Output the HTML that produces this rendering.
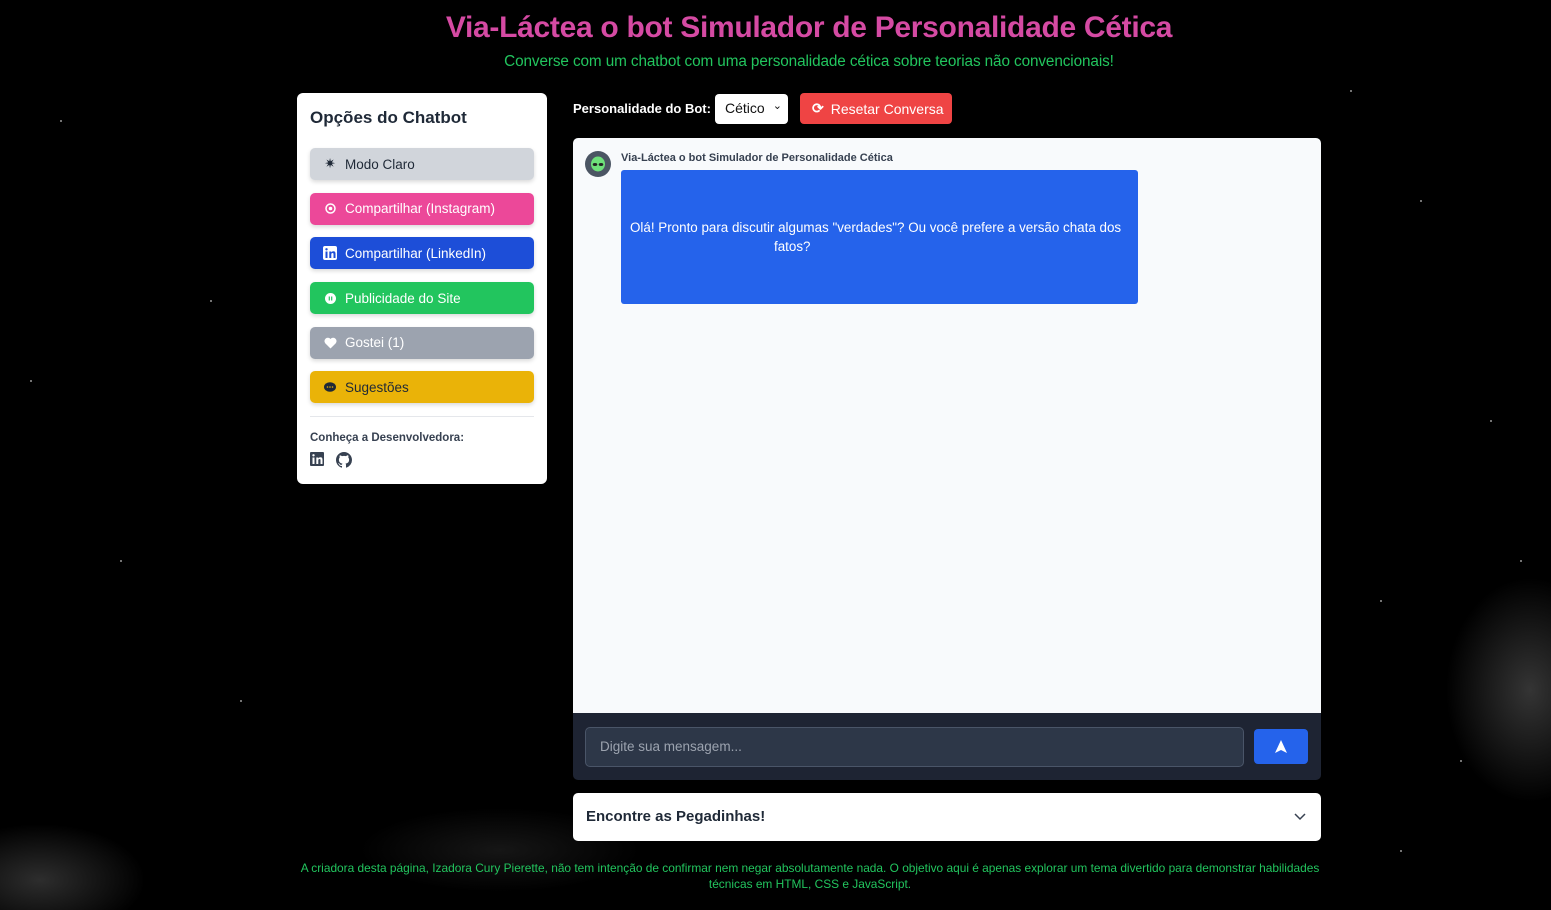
<!DOCTYPE html>
<html><head><meta charset="utf-8"><style>
*{box-sizing:border-box;margin:0;padding:0}
body{width:1551px;height:910px;overflow:hidden;background:#000;font-family:"Liberation Sans",sans-serif;position:relative}
.bg{position:absolute;inset:0;background:
radial-gradient(ellipse 120px 160px at 1530px 690px,rgba(150,150,150,.35),transparent 70%),
radial-gradient(ellipse 150px 80px at 40px 880px,rgba(150,150,150,.3),transparent 70%),
radial-gradient(ellipse 200px 60px at 500px 850px,rgba(120,120,120,.18),transparent 70%);}
.star{position:absolute;width:2px;height:2px;border-radius:50%;background:#999}
h1{position:absolute;top:11px;left:0;width:1618px;text-align:center;font-size:30px;font-weight:bold;color:#d54aa3;letter-spacing:-0.3px}
.sub{position:absolute;top:53px;left:0;width:1618px;text-align:center;font-size:15.3px;color:#22c55e;letter-spacing:-0.1px}
.side{position:absolute;left:297px;top:93px;width:250px;height:391px;background:#fff;border-radius:6px;padding:0 13px}
.side h2{font-size:17px;color:#1f2937;margin-top:15px;font-weight:bold}
.btn{height:32px;border-radius:5px;margin-top:12.7px;display:flex;align-items:center;padding-left:13px;font-size:13.5px;color:#fff;box-shadow:0 2px 4px rgba(0,0,0,.15)}
.btn .i{width:14px;margin-right:8px;display:flex;justify-content:center}
.hr{border-top:1px solid #e5e7eb;margin-top:13px}
.dev{font-size:11.5px;color:#374151;margin-top:15px;font-weight:bold}
.top{position:absolute;left:573px;top:93px;display:flex;align-items:center}
.top .l{color:#fff;font-size:13px;font-weight:bold}
.sel{margin-left:4px;width:73px;height:30px;background:#fff;border-radius:4px;font-size:14px;color:#111;padding:6px 10px;position:relative}
.reset{margin-left:12px;width:152px;height:31px;background:#ef4444;border-radius:4px;color:#fff;font-size:14px;display:flex;align-items:center;padding-left:12px}
.chat{position:absolute;left:573px;top:138px;width:748px;height:575px;background:#f8fafc;border-radius:5px 5px 0 0}
.bar{position:absolute;left:573px;top:713px;width:748px;height:67px;background:#1e2433;border-radius:0 0 5px 5px}
.inp{position:absolute;left:12px;top:14px;width:659px;height:40px;background:#2d3748;border:1px solid #4a5568;border-radius:5px;color:#9ca3af;font-size:13.5px;padding:11px 14px}
.send{position:absolute;left:681px;top:16px;width:54px;height:35px;background:#2563eb;border-radius:4px}
.acc{position:absolute;left:573px;top:793px;width:748px;height:48px;background:#fff;border-radius:5px;font-size:15px;font-weight:bold;color:#1f2937;padding:15px 13px}
.foot{position:absolute;left:250px;top:860px;width:1120px;text-align:center;font-size:11.9px;color:#22c55e;line-height:16px}
</style></head><body>
<div class="bg"></div>
<div class="star" style="left:60px;top:120px"></div><div class="star" style="left:210px;top:300px"></div><div class="star" style="left:120px;top:560px"></div><div class="star" style="left:1420px;top:200px"></div><div class="star" style="left:1490px;top:420px"></div><div class="star" style="left:1380px;top:600px"></div><div class="star" style="left:1460px;top:760px"></div><div class="star" style="left:240px;top:700px"></div><div class="star" style="left:1350px;top:90px"></div><div class="star" style="left:30px;top:380px"></div><div class="star" style="left:1520px;top:560px"></div><div class="star" style="left:1400px;top:850px"></div>
<h1>Via-Láctea o bot Simulador de Personalidade Cética</h1>
<div class="sub">Converse com um chatbot com uma personalidade cética sobre teorias não convencionais!</div>
<div class="side">
<h2>Opções do Chatbot</h2>
<div class="btn" style="background:#d1d5db;color:#1f2937;margin-top:20px"><span class="i">✷</span>Modo Claro</div>
<div class="btn" style="background:#ec4899"><span class="i"><svg width="11" height="11"><circle cx="5.5" cy="5.5" r="4.5" fill="none" stroke="#fff" stroke-width="1.5"/><circle cx="5.5" cy="5.5" r="1.8" fill="#fff"/></svg></span>Compartilhar (Instagram)</div>
<div class="btn" style="background:#1d4ed8"><span class="i"><svg width="14" height="14"><rect width="14" height="14" rx="2" fill="#fff"/><rect x="2.5" y="5.5" width="2" height="6.5" fill="#1d4ed8"/><circle cx="3.5" cy="3.3" r="1.2" fill="#1d4ed8"/><path d="M6.3 5.5h2v1c.5-.8 1.3-1.2 2.2-1.2 1.4 0 2 .9 2 2.5V12h-2V8.2c0-.8-.3-1.2-.9-1.2s-1.3.4-1.3 1.3V12h-2z" fill="#1d4ed8"/></svg></span>Compartilhar (LinkedIn)</div>
<div class="btn" style="background:#22c55e"><span class="i"><svg width="11" height="11"><circle cx="5.5" cy="5.5" r="5.5" fill="#fff"/><rect x="3.7" y="3.5" width="1.2" height="4" fill="#22c55e"/><rect x="6.1" y="3.5" width="1.2" height="4" fill="#22c55e"/></svg></span>Publicidade do Site</div>
<div class="btn" style="background:#9ca3af"><span class="i"><svg width="13" height="12"><path d="M6.5 11.5L1.2 6.2A3.2 3.2 0 016.5 2a3.2 3.2 0 015.3 4.2z" fill="#fff"/></svg></span>Gostei (1)</div>
<div class="btn" style="background:#eab308;color:#1f2937"><span class="i"><svg width="12" height="11"><ellipse cx="6" cy="5" rx="6" ry="4.8" fill="#1f2937"/><circle cx="3.5" cy="5" r=".8" fill="#eab308"/><circle cx="6" cy="5" r=".8" fill="#eab308"/><circle cx="8.5" cy="5" r=".8" fill="#eab308"/></svg></span>Sugestões</div>
<div class="hr"></div>
<div class="dev">Conheça a Desenvolvedora:</div>
<div style="margin-top:8px;display:flex;gap:12px"><svg width="14" height="14"><rect width="14" height="14" rx="1" fill="#374151"/><rect x="2.5" y="5.5" width="2" height="6.5" fill="#fff"/><circle cx="3.5" cy="3.3" r="1.2" fill="#fff"/><path d="M6.3 5.5h2v1c.5-.8 1.3-1.2 2.2-1.2 1.4 0 2 .9 2 2.5V12h-2V8.2c0-.8-.3-1.2-.9-1.2s-1.3.4-1.3 1.3V12h-2z" fill="#fff"/></svg><svg width="16" height="16" viewBox="0 0 16 16"><path fill="#374151" d="M8 0C3.58 0 0 3.58 0 8c0 3.54 2.29 6.53 5.47 7.59.4.07.55-.17.55-.38v-1.33c-2.23.48-2.7-1.07-2.7-1.07-.36-.92-.89-1.17-.89-1.17-.73-.5.05-.49.05-.49.8.06 1.23.83 1.23.83.71 1.22 1.87.87 2.33.66.07-.52.28-.87.5-1.07-1.78-.2-3.64-.89-3.64-3.95 0-.87.31-1.59.82-2.15-.08-.2-.36-1.02.08-2.12 0 0 .67-.21 2.2.82A7.6 7.6 0 018 3.87c.68 0 1.36.09 2 .27 1.53-1.04 2.2-.82 2.2-.82.44 1.1.16 1.92.08 2.12.51.56.82 1.27.82 2.15 0 3.07-1.87 3.75-3.65 3.95.29.25.54.73.54 1.48v2.2c0 .21.15.46.55.38A8 8 0 0016 8c0-4.42-3.58-8-8-8z"/></svg></div>
</div>
<div class="top"><span class="l">Personalidade do Bot:</span><div class="sel">Cético<span style="position:absolute;right:6px;top:5px;font-size:11px">⌄</span></div><div class="reset"><span style="margin-right:7px;font-weight:bold">⟳</span>Resetar Conversa</div></div>
<div class="chat">
<div style="position:absolute;left:12px;top:13px;width:26px;height:26px;border-radius:50%;background:#4b5563;display:flex;align-items:center;justify-content:center"><svg width="16" height="16"><ellipse cx="8" cy="8" rx="7" ry="7.5" fill="#6ee07a"/><ellipse cx="5" cy="8.5" rx="2.3" ry="1.5" fill="#222"/><ellipse cx="11" cy="8.5" rx="2.3" ry="1.5" fill="#222"/></svg></div>
<div style="position:absolute;left:48px;top:14px;font-size:11px;color:#374151;font-weight:bold">Via-Láctea o bot Simulador de Personalidade Cética</div>
<div style="position:absolute;left:48px;top:32px;width:517px;height:134px;background:#2563eb;border-radius:3px;color:#fff;font-size:13.4px;line-height:19px;padding-top:48px">
<div style="padding-left:9px;white-space:nowrap">Olá! Pronto para discutir algumas "verdades"? Ou você prefere a versão chata dos</div>
<div style="padding-left:153px">fatos?</div></div>
</div>
<div class="bar"><div class="inp">Digite sua mensagem...</div><div class="send"><svg width="54" height="35"><path d="M27 11l-6 13 6-3 6 3z" fill="#fff"/></svg></div></div>
<div class="acc">Encontre as Pegadinhas!<svg style="position:absolute;right:15px;top:20px" width="12" height="8"><path d="M1 1l5 5 5-5" fill="none" stroke="#374151" stroke-width="1.5"/></svg></div>
<div class="foot">A criadora desta página, Izadora Cury Pierette, não tem intenção de confirmar nem negar absolutamente nada. O objetivo aqui é apenas explorar um tema divertido para demonstrar habilidades<br>técnicas em HTML, CSS e JavaScript.</div>
</body></html>
